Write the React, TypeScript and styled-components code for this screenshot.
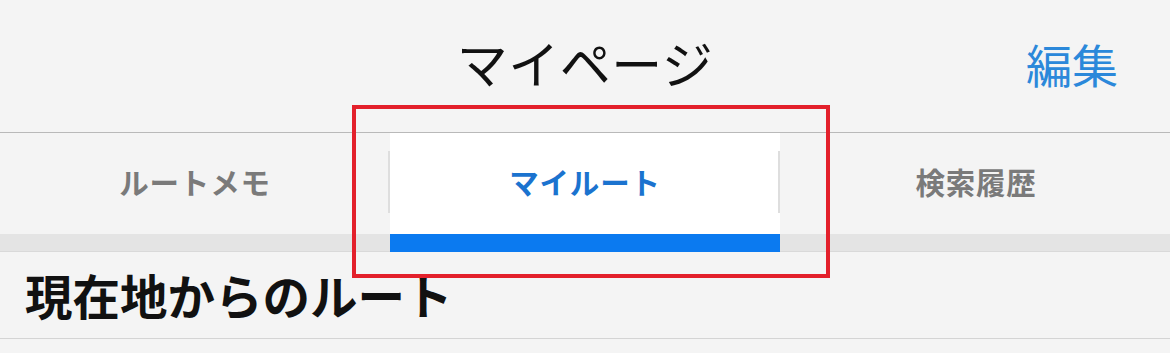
import React from "react";
import styled, { createGlobalStyle } from "styled-components";

const Global = createGlobalStyle`
  html, body { margin: 0; padding: 0; background: #f4f4f4; }
  body { font-family: "Noto Sans CJK JP", "Noto Sans", sans-serif; }
  * { box-sizing: border-box; }
`;

const Page = styled.div`
  position: relative;
  width: 1170px;
  height: 353px;
  overflow: hidden;
  background: #f4f4f4;
`;

const Header = styled.header`
  position: relative;
  height: 133px;
  display: flex;
  align-items: center;
  justify-content: center;
  border-bottom: 1px solid #b9b9b9;
  padding-bottom: 8px;
`;

const Title = styled.h1`
  margin: 0;
  font-size: 51px;
  font-weight: 400;
  color: #111;
  line-height: 1;
  letter-spacing: 0.5px;
`;

const EditButton = styled.button`
  position: absolute;
  right: 52px;
  top: 40px;
  background: none;
  border: none;
  padding: 0;
  font-family: inherit;
  font-size: 46px;
  line-height: 1;
  color: #2b88da;
`;

const TabBar = styled.nav`
  display: grid;
  grid-template-columns: repeat(3, 1fr);
  height: 119px;
`;

const Tab = styled.div`
  display: flex;
  flex-direction: column;
`;

const TabBody = styled.div<{ $active?: boolean }>`
  flex: 1;
  display: flex;
  align-items: center;
  padding-bottom: 3px;
  background: ${(p) => (p.$active ? "#ffffff" : "#f4f4f4")};
`;

const TabLabel = styled.span<{ $active?: boolean }>`
  flex: 1;
  text-align: center;
  font-size: 29.5px;
  font-weight: 700;
  line-height: 1;
  letter-spacing: 0.8px;
  color: ${(p) => (p.$active ? "#1b73cf" : "#7a7a7a")};
  padding-left: 2px;
`;

const Divider = styled.span`
  width: 2px;
  height: 62px;
  background: #dedede;
`;

const Indicator = styled.div<{ $active?: boolean }>`
  height: 18px;
  background: ${(p) => (p.$active ? "#0b7af0" : "#e4e4e4")};
  border-bottom: 1px solid ${(p) => (p.$active ? "#0b7af0" : "#d9d9d9")};
`;

const Section = styled.div`
  height: 87px;
  display: flex;
  align-items: center;
  padding-left: 25px;
  border-bottom: 1px solid #d4d4d4;
`;

const SectionTitle = styled.h2`
  margin: 0;
  font-size: 47.5px;
  font-weight: 700;
  color: #111;
  line-height: 1;
  letter-spacing: 0px;
`;

const Highlight = styled.div`
  position: absolute;
  left: 352px;
  top: 105px;
  width: 478px;
  height: 173px;
  border: 4.5px solid #e3202b;
  pointer-events: none;
`;

const tabs = [
  { label: "ルートメモ", divider: true },
  { label: "マイルート", divider: true, active: true },
  { label: "検索履歴", divider: false },
];

export default function App() {
  return (
    <>
      <Global />
      <Page>
        <Header>
          <Title>マイページ</Title>
          <EditButton>編集</EditButton>
        </Header>
        <TabBar>
          {tabs.map((t) => (
            <Tab key={t.label}>
              <TabBody $active={t.active}>
                <TabLabel $active={t.active}>{t.label}</TabLabel>
                {t.divider && <Divider />}
              </TabBody>
              <Indicator $active={t.active} />
            </Tab>
          ))}
        </TabBar>
        <Section>
          <SectionTitle>現在地からのルート</SectionTitle>
        </Section>
        <Highlight />
      </Page>
    </>
  );
}
